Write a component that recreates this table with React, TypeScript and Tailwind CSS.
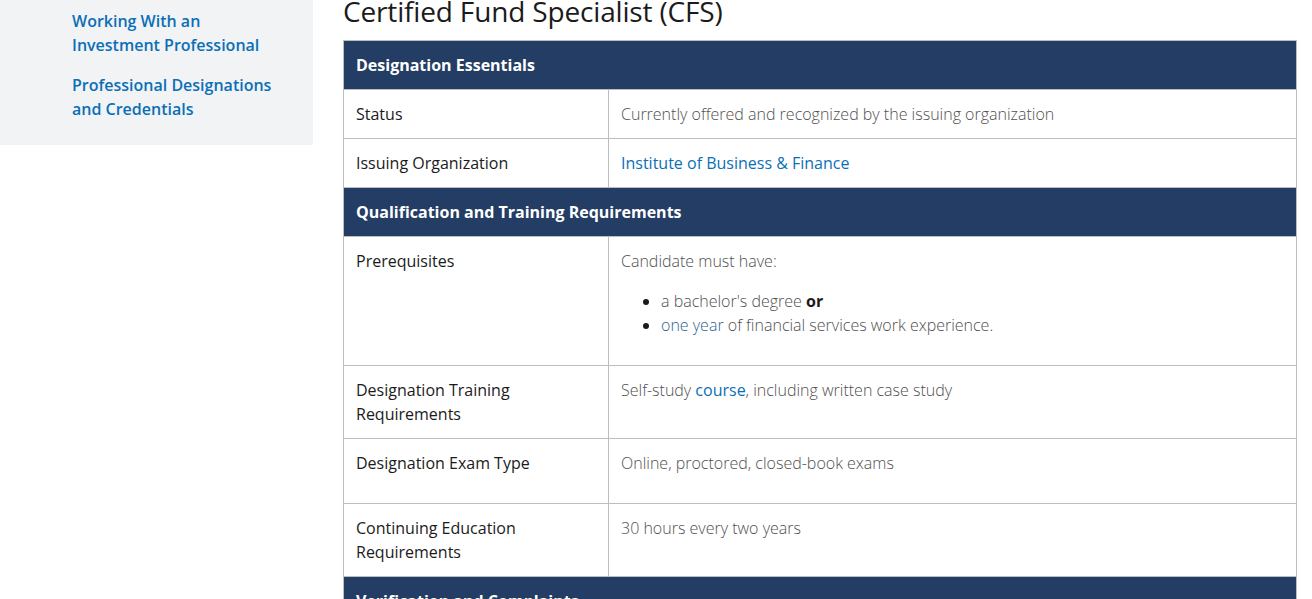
import React from "react";

const font = { fontFamily: '"Open Sans", "Liberation Sans", sans-serif' };

function Header({ children }: { children: React.ReactNode }) {
  return (
    <tr>
      <th colSpan={2} className="bg-[#233d64] text-white text-left font-bold text-[16px] leading-[24px] px-3 py-3 border border-[#bdbdbd]">
        {children}
      </th>
    </tr>
  );
}

function Row({ label, children }: { label: React.ReactNode; children: React.ReactNode }) {
  return (
    <tr>
      <td className="align-top w-[265px] px-3 py-3 border border-[#bdbdbd] text-[#1b1b1b] text-[16px] leading-[24px]">{label}</td>
      <td className="align-top px-3 py-3 border border-[#bdbdbd] text-[#505050] font-light text-[16px] leading-[24px]">{children}</td>
    </tr>
  );
}

export default function App() {
  return (
    <div style={font} className="w-[1312px] h-[599px] overflow-hidden bg-white flex">
      <aside className="w-[313px] shrink-0">
        <div className="bg-[#f2f3f5] h-[145px] pl-[72px] pr-4 pt-[9px] flex flex-col gap-4">
          <a className="text-[#0b6fb6] font-semibold text-[16px] leading-[24px]">Working With an<br />Investment Professional</a>
          <a className="text-[#0b6fb6] font-semibold text-[16px] leading-[24px]">Professional Designations<br />and Credentials</a>
        </div>
      </aside>
      <main className="ml-[30px] w-[954px]">
        <h1 className="text-[28px] leading-[36px] text-[#1b1b1b] mt-[-7px] mb-[11px] font-normal tracking-[-0.16px]">Certified Fund Specialist (CFS)</h1>
        <table className="w-full border-collapse">
          <tbody>
            <Header>Designation Essentials</Header>
            <Row label="Status">Currently offered and recognized by the issuing organization</Row>
            <Row label="Issuing Organization">
              <a className="text-[#0b6fb6] font-normal">Institute of Business &amp; Finance</a>
            </Row>
            <Header>Qualification and Training Requirements</Header>
            <Row label="Prerequisites">
              <p className="mb-4">Candidate must have:</p>
              <ul className="list-disc pl-10 mb-4 marker:text-[#1b1b1b]">
                <li>a bachelor's degree <strong className="font-bold text-[#1b1b1b]">or</strong></li>
                <li><span className="text-[#2f5f8f]">one year</span> of financial services work experience.</li>
              </ul>
            </Row>
            <Row label={<>Designation Training<br />Requirements</>}>
              <p className="mb-4">Self-study <a className="text-[#0b6fb6] font-normal">course</a>, including written case study</p>
            </Row>
            <Row label="Designation Exam Type">
              <p className="mb-4">Online, proctored, closed-book exams</p>
            </Row>
            <Row label={<>Continuing Education<br />Requirements</>}>
              <p className="mb-4">30 hours every two years</p>
            </Row>
            <Header>Verification and Complaints</Header>
          </tbody>
        </table>
      </main>
    </div>
  );
}
